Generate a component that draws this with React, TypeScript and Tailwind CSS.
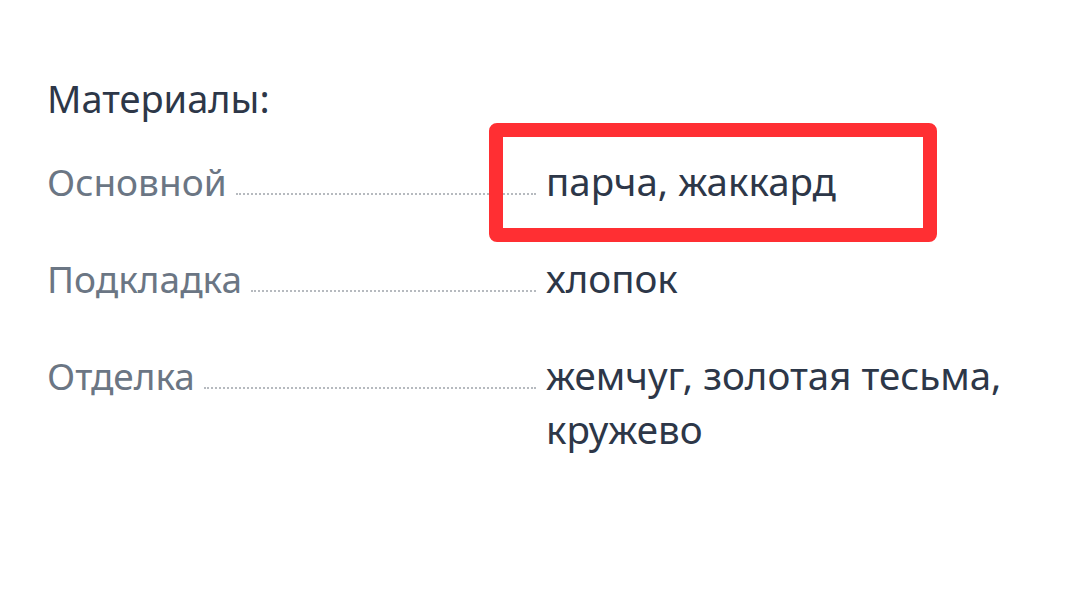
const rows = [
  { label: 'Основной', value: 'парча, жаккард' },
  { label: 'Подкладка', value: 'хлопок' },
  { label: 'Отделка', value: 'жемчуг, золотая тесьма, кружево' },
];

export default function App() {
  return (
    <div
      className="relative h-[590px] w-[1080px] bg-white pl-[47px] pt-[72px]"
      style={{ fontFamily: '"Noto Sans", "Open Sans", sans-serif' }}
    >
      <h2 className="text-[38px] leading-[53px] text-[#2d3748]">Материалы:</h2>

      <div className="mt-[29px] flex flex-col gap-[42px]">
        {rows.map((row) => (
          <div key={row.label} className="flex items-baseline">
            <div className="flex w-[489px] shrink-0 items-baseline">
              <span className="text-[37px] leading-[54px] text-[#6b7684]">{row.label}</span>
              <div className="ml-[9px] flex-1 -translate-y-[1px] border-b-2 border-dotted border-[#b6babf]" />
            </div>
            <div className="w-[470px] pl-[10px] text-[38.5px] leading-[54px] text-[#2d3748]">
              {row.value}
            </div>
          </div>
        ))}
      </div>

      {/* annotation box */}
      <div className="absolute left-[489px] top-[123px] h-[119px] w-[448px] rounded-[8px] border-[14px] border-[#ff2f33]" />
    </div>
  );
}
